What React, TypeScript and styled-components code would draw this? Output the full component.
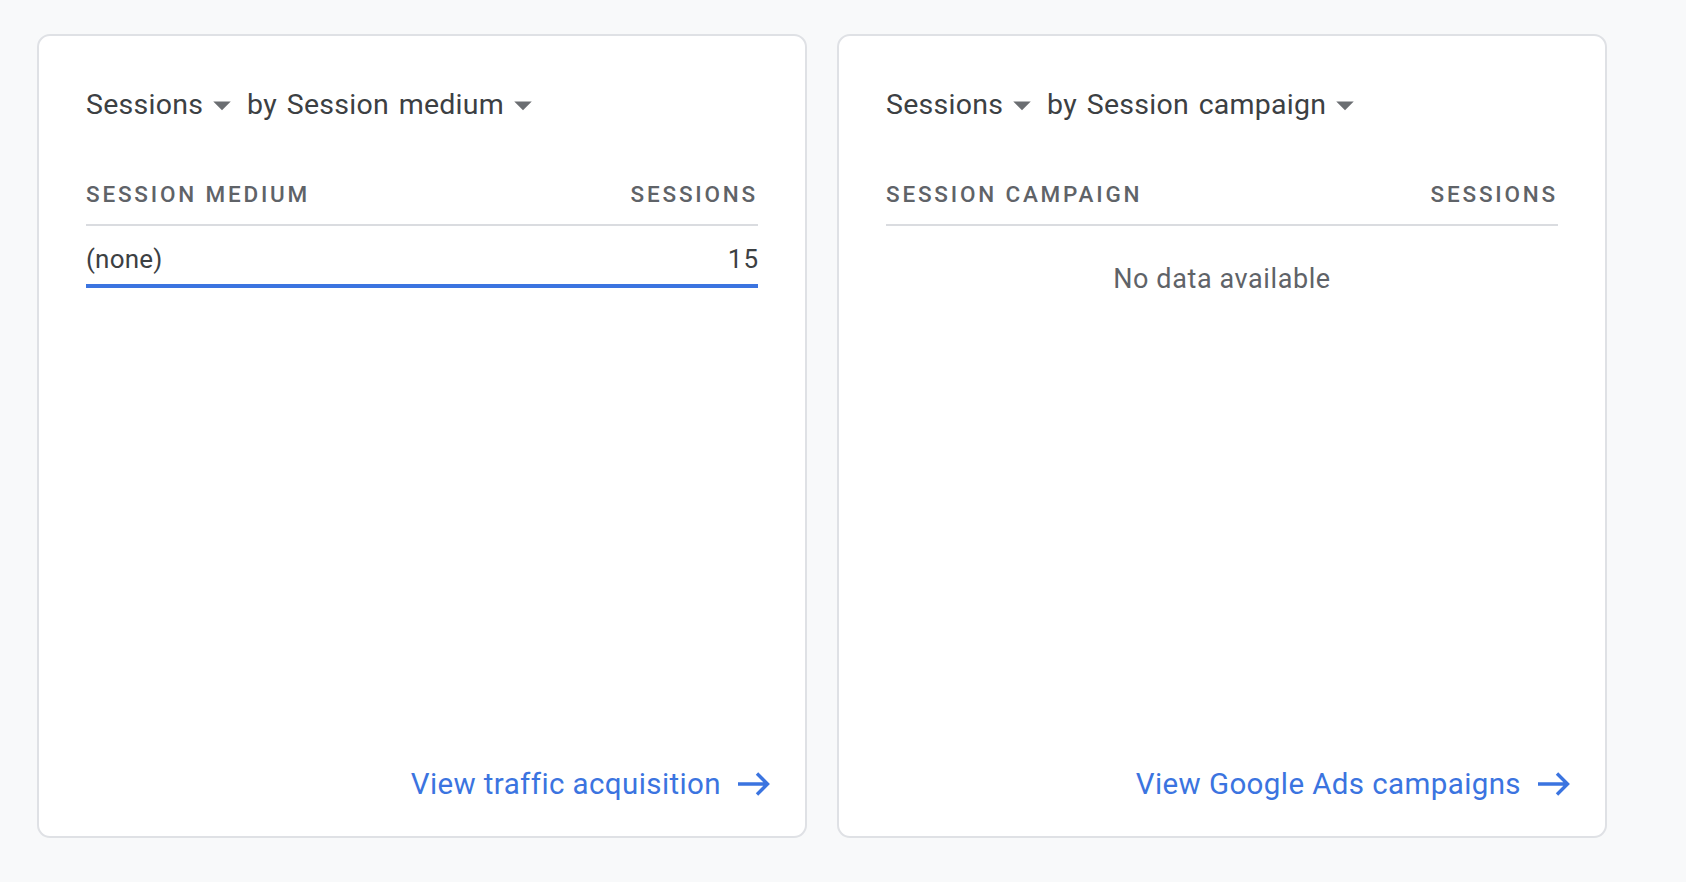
import React from "react";
import styled, { createGlobalStyle } from "styled-components";

const GlobalStyle = createGlobalStyle`
  html, body {
    margin: 0;
    padding: 0;
    background: #f8f9fa;
  }
  body {
    font-family: Roboto, "Noto Sans", Arial, sans-serif;
    -webkit-font-smoothing: antialiased;
  }
`;

const Page = styled.div`
  display: flex;
  gap: 30px;
  padding: 34px 0 0 37px;
  height: 882px;
  box-sizing: border-box;
`;

const Card = styled.section`
  width: 770px;
  height: 804px;
  box-sizing: border-box;
  background: #ffffff;
  border: 2px solid #dfe1e5;
  border-radius: 13px;
  padding: 48px 47px 28px 47px;
  display: flex;
  flex-direction: column;
`;

const TitleRow = styled.div`
  display: flex;
  align-items: center;
  gap: 4px;
  height: 42px;
`;

const Dropdown = styled.button`
  display: inline-flex;
  align-items: center;
  border: none;
  background: none;
  padding: 0;
  margin: 0;
  cursor: pointer;
  font-family: Roboto, "Noto Sans", Arial, sans-serif;
  font-size: 28.5px;
  letter-spacing: 0.25px;
  word-spacing: 2.5px;
  color: #3c4043;
  line-height: 42px;
  white-space: pre;
`;

const Caret = styled.svg`
  width: 42px;
  height: 42px;
  margin-left: -2px;
  fill: #6b6e72;
  flex: none;
`;

const HeaderRow = styled.div`
  display: flex;
  justify-content: space-between;
  align-items: center;
  margin-top: 54px;
  height: 28px;
  padding-bottom: 16px;
  border-bottom: 2px solid #dadce0;
  font-size: 22.5px;
  font-weight: 500;
  letter-spacing: 2.8px;
  text-transform: uppercase;
  color: #5f6368;
`;

const HeaderCell = styled.span`
  white-space: nowrap;
`;

const DataRow = styled.div`
  display: flex;
  flex-direction: column;
  padding-top: 18px;
`;

const DataLine = styled.div`
  display: flex;
  justify-content: space-between;
  align-items: center;
  height: 30px;
  font-size: 26px;
  letter-spacing: 0.2px;
  color: #3c4043;
`;

const Value = styled.span`
  letter-spacing: 1px;
  margin-right: -1px;
`;

const BarTrack = styled.div`
  margin-top: 10px;
  height: 4px;
`;

const BarFill = styled.div`
  height: 100%;
  background: #3b74e0;
`;

const Empty = styled.div`
  margin-top: 38px;
  text-align: center;
  font-size: 27px;
  letter-spacing: 0.6px;
  line-height: 30px;
  color: #5f6368;
`;

const Footer = styled.div`
  margin-top: auto;
  margin-right: -12px;
  display: flex;
  justify-content: flex-end;
`;

const LinkButton = styled.a`
  display: inline-flex;
  align-items: center;
  gap: 17px;
  height: 48px;
  font-family: Roboto, "Noto Sans", Arial, sans-serif;
  font-size: 29.5px;
  letter-spacing: 0.4px;
  color: #3b74e0;
  text-decoration: none;
  cursor: pointer;
`;

const ArrowIcon = styled.svg`
  width: 32px;
  height: 26px;
  flex: none;
`;

const CaretIcon = () => (
  <Caret viewBox="0 0 24 24" aria-hidden="true">
    <path d="M7 10l5 5 5-5z" />
  </Caret>
);

const Arrow = () => (
  <ArrowIcon viewBox="0 0 32 26" aria-hidden="true">
    <path
      d="M0 13H29M19 2.5L29.5 13L19 23.5"
      fill="none"
      stroke="#3b74e0"
      strokeWidth="3.4"
    />
  </ArrowIcon>
);

type Row = { label: string; value: number };

type CardProps = {
  dimension: string;
  rows: Row[];
  link: string;
};

const ReportCard = ({ dimension, rows, link }: CardProps) => {
  const max = Math.max(1, ...rows.map((r) => r.value));
  return (
    <Card>
      <TitleRow>
        <Dropdown>
          Sessions
          <CaretIcon />
        </Dropdown>
        <Dropdown>
          by {dimension}
          <CaretIcon />
        </Dropdown>
      </TitleRow>
      <HeaderRow>
        <HeaderCell>{dimension}</HeaderCell>
        <HeaderCell>Sessions</HeaderCell>
      </HeaderRow>
      {rows.length === 0 ? (
        <Empty>No data available</Empty>
      ) : (
        rows.map((r) => (
          <DataRow key={r.label}>
            <DataLine>
              <span>{r.label}</span>
              <Value>{r.value}</Value>
            </DataLine>
            <BarTrack>
              <BarFill style={{ width: `${(r.value / max) * 100}%` }} />
            </BarTrack>
          </DataRow>
        ))
      )}
      <Footer>
        <LinkButton>
          {link}
          <Arrow />
        </LinkButton>
      </Footer>
    </Card>
  );
};

export default function App() {
  return (
    <>
      <GlobalStyle />
      <Page>
        <ReportCard
          dimension="Session medium"
          rows={[{ label: "(none)", value: 15 }]}
          link="View traffic acquisition"
        />
        <ReportCard
          dimension="Session campaign"
          rows={[]}
          link="View Google Ads campaigns"
        />
      </Page>
    </>
  );
}
